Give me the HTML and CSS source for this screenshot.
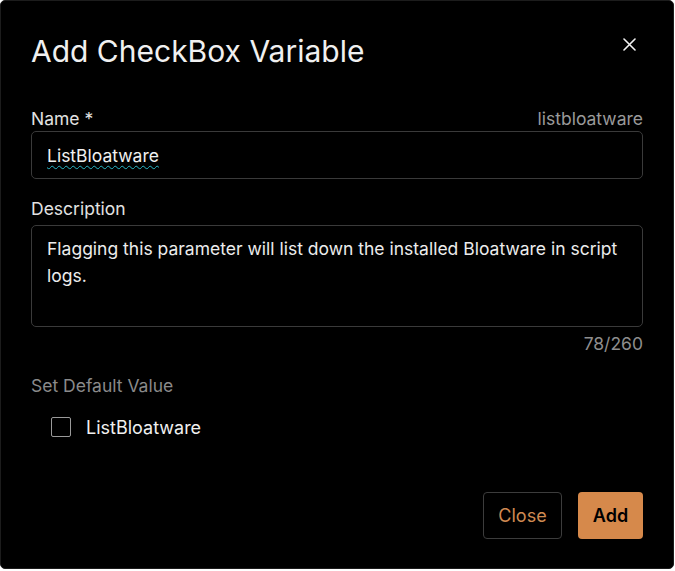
FILE: index.html
```html
<!DOCTYPE html>
<html lang="en">
<head>
<meta charset="utf-8">
<title>Add CheckBox Variable</title>
<link rel="stylesheet" href="styles.css">
</head>
<body>
<div class="dialog">
  <div class="header">
    <h1 class="title">Add CheckBox Variable</h1>
    <button class="close-x" aria-label="Close">
      <svg width="13" height="13" viewBox="0 0 13 13"><path d="M1 1L12 12M12 1L1 12" stroke="#f2f2f2" stroke-width="1.6" stroke-linecap="round"/></svg>
    </button>
  </div>
  <div class="field">
    <div class="label-row">
      <span class="label">Name *</span>
      <span class="hint">listbloatware</span>
    </div>
    <div class="input"><span class="spell">ListBloatware</span></div>
  </div>
  <div class="field desc">
    <div class="label-row"><span class="label">Description</span></div>
    <div class="textarea">Flagging this parameter will list down the installed Bloatware in script logs.</div>
    <div class="counter">78/260</div>
  </div>
  <div class="default">
    <div class="sub-label">Set Default Value</div>
    <label class="check-row"><span class="box"></span><span class="check-text">ListBloatware</span></label>
  </div>
  <div class="footer">
    <button class="btn btn-outline">Close</button>
    <button class="btn btn-primary">Add</button>
  </div>
</div>
</body>
</html>
```
FILE: styles.css
```css
html, body {
  margin: 0;
  padding: 0;
  background: #ffffff;
  width: 675px;
  height: 571px;
  overflow: hidden;
}
body {
  font-family: Inter, "Noto Sans", sans-serif;
}
.dialog {
  box-sizing: border-box;
  width: 674px;
  height: 569px;
  background: #000;
  border-radius: 5px;
  border: 1px solid #1c1c1c;
  padding: 0 30px;
  display: flex;
  flex-direction: column;
  color: #e8e8e8;
}
.header {
  display: flex;
  justify-content: space-between;
  align-items: flex-start;
  padding-top: 32px;
  height: 104px;
  box-sizing: border-box;
}
.title {
  margin: 0;
  font-size: 30px;
  font-weight: 400;
  line-height: 36px;
  color: #f0f0f0;
}
.close-x {
  background: none;
  border: none;
  padding: 0;
  margin: 4px 6px 0 0;
  width: 15px;
  height: 15px;
  display: flex;
  align-items: center;
  justify-content: center;
}
.field {
  display: flex;
  flex-direction: column;
}
.label-row {
  display: flex;
  justify-content: space-between;
  align-items: center;
  height: 26px;
  font-size: 17.5px;
}
.label { color: #e2e2e2; }
.hint { color: #9a9a9a; }
.input {
  box-sizing: border-box;
  height: 48px;
  border: 1px solid #3a3a3a;
  border-radius: 5px;
  padding: 0 15px;
  display: flex;
  align-items: center;
  font-size: 17.5px;
  color: #f0f0f0;
}
.spell {
  text-decoration: underline wavy #2ab8c8;
  text-decoration-thickness: 1px;
  text-underline-offset: 3px;
}
.desc { margin-top: 16px; }
.textarea {
  box-sizing: border-box;
  margin-top: 4px;
  height: 102px;
  border: 1px solid #3a3a3a;
  border-radius: 5px;
  padding: 9px 15px;
  font-size: 17.5px;
  line-height: 27px;
  color: #ececec;
}
.counter {
  text-align: right;
  color: #8e8e8e;
  font-size: 17.5px;
  margin-top: 6px;
  line-height: 22px;
}
.default {
  margin-top: 20px;
}
.sub-label {
  color: #8a8a8a;
  font-size: 17.5px;
  line-height: 22px;
}
.check-row {
  display: flex;
  align-items: center;
  height: 22px;
  margin-top: 19px;
  padding-left: 20px;
}
.box {
  box-sizing: border-box;
  width: 20px;
  height: 20px;
  border: 1px solid #9a9a9a;
  border-radius: 2px;
}
.check-text {
  margin-left: 15px;
  font-size: 18px;
  color: #f0f0f0;
}
.footer {
  margin-top: auto;
  margin-bottom: 29px;
  display: flex;
  justify-content: flex-end;
  gap: 16px;
}
.btn {
  font-family: Inter, "Noto Sans", sans-serif;
  font-size: 18px;
  height: 47px;
  border-radius: 4px;
  padding: 0;
  cursor: pointer;
}
.btn-outline {
  background: #000;
  color: #cf8a52;
  border: 1px solid #3c3c3c;
  width: 79px;
}
.btn-primary {
  background: #d6894b;
  color: #000;
  border: none;
  font-weight: 600;
  width: 65px;
}
```
